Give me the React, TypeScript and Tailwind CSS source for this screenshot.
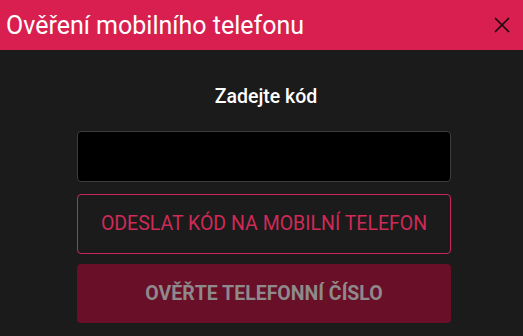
import { X } from 'lucide-react';

const App = () => {
  return (
    <div className="w-[523px] h-[336px] bg-[#1b1b1b] overflow-hidden font-['Roboto',sans-serif]">
      <div className="h-[50px] bg-[#d81f50] flex items-center justify-between pl-[6px] pr-[8px]">
        <h1 className="text-white text-[25px] leading-none">Ověření mobilního telefonu</h1>
        <button className="text-[#1a0a0e]">
          <X size={26} strokeWidth={1.6} />
        </button>
      </div>

      <div className="flex flex-col items-center pt-[34px] pl-[5px]">
        <p className="text-white text-[19.5px] font-medium leading-[26px] ml-[4px]">Zadejte kód</p>
        <input
          type="text"
          className="mt-[21px] w-[374px] h-[51px] bg-black border border-[#3d3d3d] rounded-[4px] outline-none text-white px-3"
        />
        <button className="mt-[12px] w-[374px] h-[60px] border border-[#c8295a] rounded-[4px] text-[#cf2a58] text-[19.5px] uppercase">
          Odeslat kód na mobilní telefon
        </button>
        <button className="mt-[10px] w-[374px] h-[59px] bg-[#6a0f28] rounded-[4px] text-[#8e8a8b] text-[19.5px] font-bold uppercase">
          Ověřte telefonní číslo
        </button>
      </div>
    </div>
  );
};

export default App;
